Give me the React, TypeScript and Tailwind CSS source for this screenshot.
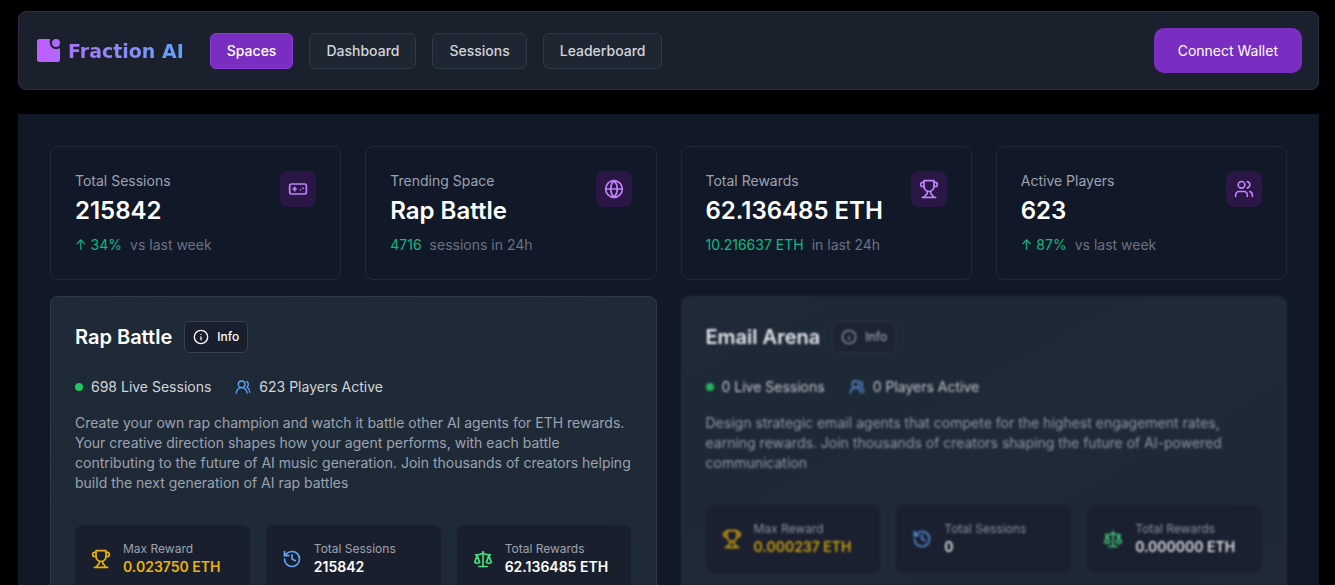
import type { ReactNode } from "react";
import { Gamepad, Globe, History, Info, Scale, Users, UsersRound } from "lucide-react";

type Stat = {
  label: string;
  value: string;
  highlight: string;
  note: string;
  icon: ReactNode;
};

type Space = {
  name: string;
  liveSessions: number;
  players: number;
  description: string;
  maxReward: string;
  totalSessions: string;
  totalRewards: string;
  locked?: boolean;
};

const NAV_ITEMS = ["Spaces", "Dashboard", "Sessions", "Leaderboard"];

const STATS: Stat[] = [
  { label: "Total Sessions", value: "215842", highlight: "↑ 34%", note: "vs last week", icon: <Gamepad size={20} /> },
  { label: "Trending Space", value: "Rap Battle", highlight: "4716", note: "sessions in 24h", icon: <Globe size={20} /> },
  { label: "Total Rewards", value: "62.136485 ETH", highlight: "10.216637 ETH", note: "in last 24h", icon: <TrophyIcon /> },
  { label: "Active Players", value: "623", highlight: "↑ 87%", note: "vs last week", icon: <Users size={20} /> },
];

const SPACES: Space[] = [
  {
    name: "Rap Battle",
    liveSessions: 698,
    players: 623,
    description:
      "Create your own rap champion and watch it battle other AI agents for ETH rewards. Your creative direction shapes how your agent performs, with each battle contributing to the future of AI music generation. Join thousands of creators helping build the next generation of AI rap battles",
    maxReward: "0.023750 ETH",
    totalSessions: "215842",
    totalRewards: "62.136485 ETH",
  },
  {
    name: "Email Arena",
    liveSessions: 0,
    players: 0,
    description:
      "Design strategic email agents that compete for the highest engagement rates, earning rewards. Join thousands of creators shaping the future of AI-powered communication",
    maxReward: "0.000237 ETH",
    totalSessions: "0",
    totalRewards: "0.000000 ETH",
    locked: true,
  },
];

function TrophyIcon() {
  return (
    <svg
      width="20"
      height="20"
      viewBox="0 0 24 24"
      fill="none"
      stroke="currentColor"
      strokeWidth="2"
      strokeLinecap="round"
      strokeLinejoin="round"
      aria-hidden="true"
    >
      <path d="M6 9H4.5a2.5 2.5 0 0 1 0-5H6" />
      <path d="M18 9h1.5a2.5 2.5 0 0 0 0-5H18" />
      <path d="M4 22h16" />
      <path d="M10 14.66V17c0 .55-.47.98-.97 1.21C7.85 18.75 7 20.24 7 22" />
      <path d="M14 14.66V17c0 .55.47.98.97 1.21C16.15 18.75 17 20.24 17 22" />
      <path d="M18 2H6v7a6 6 0 0 0 12 0V2Z" />
    </svg>
  );
}

function Logo() {
  return (
    <a href="#" className="flex items-center gap-2 px-0.5">
      <svg width="23" height="23" viewBox="0 0 23 23" aria-hidden="true">
        <defs>
          <linearGradient id="logo-mark" x1="0" y1="0" x2="1" y2="0">
            <stop offset="0" stopColor="#c35cff" />
            <stop offset="1" stopColor="#ad6bfc" />
          </linearGradient>
        </defs>
        <path
          fill="url(#logo-mark)"
          d="M2.5 0H13.2C12.8 1 12.6 2.4 12.8 4C13.2 7.6 15.8 10 19 10C20.6 10 22 9.7 23 9V20.5A2.5 2.5 0 0 1 20.5 23H2.5A2.5 2.5 0 0 1 0 20.5V2.5A2.5 2.5 0 0 1 2.5 0Z"
        />
        <circle cx="19" cy="4" r="4" fill="#b168fd" />
      </svg>
      <span className="bg-linear-to-r from-[#a873fb] to-[#5ba2fb] bg-clip-text font-['DejaVu_Sans',sans-serif] text-[19px] leading-6 font-bold text-transparent">
        Fraction AI
      </span>
    </a>
  );
}

function Header() {
  return (
    <header className="flex items-center justify-between rounded-lg border border-[#33294a] bg-[#1a212c] p-4">
      <div className="flex items-center gap-6">
        <Logo />
        <nav className="flex items-center gap-4">
          {NAV_ITEMS.map((item, i) => (
            <button
              key={item}
              className={`rounded-md border px-4 py-[7px] text-sm font-medium ${
                i === 0
                  ? "border-[#8b3bd8] bg-[#7a2ec1] text-white"
                  : "border-[#2f3a47] bg-[#1d2631] text-[#d1d5db]"
              }`}
            >
              {item}
            </button>
          ))}
        </nav>
      </div>
      <button className="h-[45px] rounded-[10px] bg-[#7a2ec1] px-6 text-sm text-white">
        Connect Wallet
      </button>
    </header>
  );
}

function StatCard({ stat }: { stat: Stat }) {
  return (
    <div className="flex items-start justify-between rounded-lg border border-[#1f2937] p-6">
      <div>
        <p className="text-sm text-[#9ca3af]">{stat.label}</p>
        <p className="mt-1 text-2xl font-semibold text-white">{stat.value}</p>
        <p className="mt-2 flex gap-2 text-sm">
          <span className="text-[#10b981]">{stat.highlight}</span>
          <span className="text-[#6b7280]">{stat.note}</span>
        </p>
      </div>
      <div className="rounded-lg bg-[#2a1745] p-2 text-[#c084fc]">{stat.icon}</div>
    </div>
  );
}

function RewardTile({ icon, label, value, valueColor = "text-white" }: {
  icon: ReactNode;
  label: string;
  value: string;
  valueColor?: string;
}) {
  return (
    <div className="flex items-center gap-3 rounded-lg bg-[#1a1f2e] p-4">
      {icon}
      <div>
        <p className="text-xs text-[#9ca3af]">{label}</p>
        <p className={`text-sm font-semibold ${valueColor}`}>{value}</p>
      </div>
    </div>
  );
}

function SpaceCard({ space }: { space: Space }) {
  return (
    <section
      className={`rounded-lg border bg-linear-to-br from-[#1f2937] via-[#1e2a36] to-[#1f2937] p-6 ${
        space.locked ? "border-[#232d3a] blur-[1px]" : "border-[#303a48]"
      }`}
    >
      <div className="flex items-center gap-3">
        <h2 className={`text-xl font-semibold ${space.locked ? "text-[#e5e7eb]" : "text-white"}`}>
          {space.name}
        </h2>
        <button
          disabled={space.locked}
          className="flex h-8 items-center gap-2 rounded-md border border-[#374151] bg-[#1a1f2e] px-2 text-xs font-medium text-white disabled:opacity-50"
        >
          <Info size={16} />
          Info
        </button>
      </div>

      <div className={`mt-6 flex items-center gap-6 text-sm text-[#d1d5db] ${space.locked ? "opacity-90" : ""}`}>
        <div className="flex items-center gap-2">
          <span className="size-2 rounded-full bg-[#22c55e]" />
          {space.liveSessions} Live Sessions
        </div>
        <div className="flex items-center gap-2">
          <UsersRound size={16} className="text-[#60a5fa]" />
          {space.players} Players Active
        </div>
      </div>

      <p className={`mt-4 text-sm text-[#9ca3af] ${space.locked ? "opacity-90" : ""}`}>{space.description}</p>

      <div className={`mt-8 grid grid-cols-3 gap-4 ${space.locked ? "opacity-85" : ""}`}>
        <RewardTile
          icon={<span className="text-[#eab308]"><TrophyIcon /></span>}
          label="Max Reward"
          value={space.maxReward}
          valueColor="text-[#eab308]"
        />
        <RewardTile
          icon={<History size={20} className="text-[#60a5fa]" />}
          label="Total Sessions"
          value={space.totalSessions}
        />
        <RewardTile
          icon={<Scale size={20} className="text-[#4ade80]" />}
          label="Total Rewards"
          value={space.totalRewards}
        />
      </div>
    </section>
  );
}

export default function App() {
  return (
    <div className="min-h-screen bg-black pt-[11px] pr-4 pl-[18px] font-[Inter,sans-serif]">
      <Header />
      <main className="mt-6 bg-[#111827] p-8">
        <div className="grid grid-cols-4 gap-6">
          {STATS.map((stat) => (
            <StatCard key={stat.label} stat={stat} />
          ))}
        </div>
        <div className="mt-4 grid grid-cols-2 gap-6">
          {SPACES.map((space) => (
            <SpaceCard key={space.name} space={space} />
          ))}
        </div>
      </main>
    </div>
  );
}
